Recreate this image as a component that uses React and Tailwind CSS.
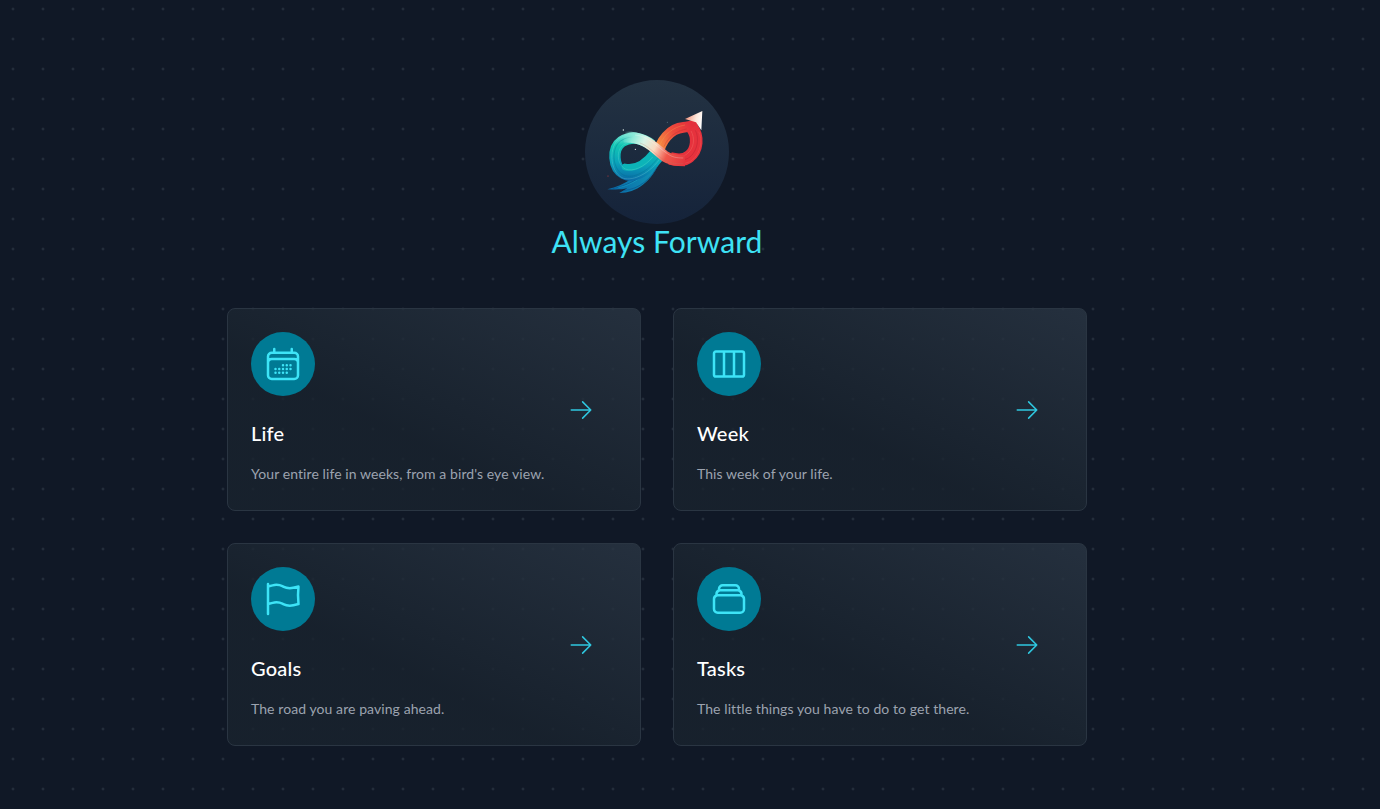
import React from "react";
import { HiOutlineCalendarDays, HiOutlineViewColumns, HiOutlineFlag, HiOutlineRectangleStack, HiOutlineArrowRight } from "react-icons/hi2";

function Logo() {
  return (
    <svg viewBox="-15 -45 432 432" className="w-36 h-36 block" fill="none">
      <defs>
        <linearGradient id="teal" gradientUnits="userSpaceOnUse" x1="120" y1="115" x2="110" y2="265">
          <stop offset="0" stopColor="#7fe6d6" />
          <stop offset="0.25" stopColor="#12c6b4" />
          <stop offset="0.6" stopColor="#0aa3ba" />
          <stop offset="1" stopColor="#0a62a4" />
        </linearGradient>
        <linearGradient id="cross" gradientUnits="userSpaceOnUse" x1="100" y1="120" x2="290" y2="215">
          <stop offset="0" stopColor="#7fe6d6" stopOpacity="0" />
          <stop offset="0.14" stopColor="#8fead9" />
          <stop offset="0.3" stopColor="#d8f3e6" />
          <stop offset="0.48" stopColor="#f9d9c0" />
          <stop offset="0.68" stopColor="#f0574a" />
          <stop offset="1" stopColor="#e3303c" />
        </linearGradient>
        <linearGradient id="red" gradientUnits="userSpaceOnUse" x1="205" y1="145" x2="305" y2="90">
          <stop offset="0" stopColor="#f68a42" />
          <stop offset="0.5" stopColor="#ee4a3c" />
          <stop offset="1" stopColor="#e3303c" />
        </linearGradient>
        <linearGradient id="tail" gradientUnits="userSpaceOnUse" x1="210" y1="190" x2="60" y2="285">
          <stop offset="0" stopColor="#129cb8" />
          <stop offset="1" stopColor="#0a6aa8" />
        </linearGradient>
        <linearGradient id="head" gradientUnits="userSpaceOnUse" x1="285" y1="72" x2="337" y2="85">
          <stop offset="0" stopColor="#f2907a" />
          <stop offset="0.6" stopColor="#fde8dc" />
          <stop offset="1" stopColor="#ffffff" />
        </linearGradient>
      </defs>
      {/* tail fan */}
      <path d="M175 200 C150 240 105 270 52 283 C80 284 95 284 112 280 C100 287 95 290 88 294 C135 295 185 265 214 190 Z" fill="url(#tail)" />
      <path d="M68 281 C115 272 165 245 192 205" stroke="#0a4f88" strokeWidth="2.4" opacity="0.7" />
      <path d="M100 287 C150 282 185 250 205 208" stroke="#0a4f88" strokeWidth="2.4" opacity="0.7" />
      <path d="M85 278 C125 270 165 245 185 210" stroke="#22c0d8" strokeWidth="2" opacity="0.5" />
      {/* left loop */}
      <path d="M205 185 C170 232 125 250 102 236 C68 218 66 160 95 140 C122 122 155 128 185 150" stroke="url(#teal)" strokeWidth="34" strokeLinecap="butt" />
      <path d="M190 172 C165 205 135 222 105 216" stroke="#0cb4b8" strokeWidth="20" strokeLinecap="round" />
      <path d="M188 186 C165 215 128 232 106 222 C80 208 78 165 100 150 C122 135 150 140 175 156" stroke="#7fe8da" strokeWidth="2.2" opacity="0.35" />
      <path d="M203 190 C168 236 124 252 100 240 C66 222 62 158 93 137 C122 118 158 126 186 146" stroke="#076f8c" strokeWidth="2.6" opacity="0.4" />
      <path d="M208 194 C172 242 122 260 96 248 C58 228 56 154 88 130 C120 110 162 118 192 140" stroke="#a6f2e6" strokeWidth="2.2" opacity="0.3" />
      {/* upper red sweep */}
      <path d="M205 178 C210 140 240 100 280 97 C295 96 308 92 322 88" stroke="url(#red)" strokeWidth="32" strokeLinecap="butt" />
      <path d="M210 150 C222 118 250 96 285 90" stroke="#f8a857" strokeWidth="2.2" opacity="0.45" />
      <path d="M222 155 C234 126 258 108 290 102" stroke="#a82130" strokeWidth="2.2" opacity="0.35" />
      {/* red loop rear */}
      <path d="M306 98 C326 125 322 165 298 184 C284 196 262 196 240 190" stroke="#e6323d" strokeWidth="38" strokeLinecap="butt" />
      <path d="M303 108 C316 130 312 160 292 176 C278 187 262 187 246 182" stroke="#f2706a" strokeWidth="2.2" opacity="0.55" />
      <path d="M316 106 C328 128 324 165 300 186 C284 198 262 198 240 191" stroke="#a81f30" strokeWidth="2.4" opacity="0.4" />
      <path d="M326 110 C338 134 334 172 306 196 C288 209 258 209 236 199" stroke="#f5605a" strokeWidth="2.2" opacity="0.5" />
      {/* crossing band */}
      <path d="M100 126 C165 122 195 162 225 184 C240 194 255 197 285 197" stroke="url(#cross)" strokeWidth="33" strokeLinecap="butt" />
      <path d="M135 120 C172 122 200 154 232 176 C246 186 258 189 280 189" stroke="#ffffff" strokeWidth="2.2" opacity="0.35" />
      <path d="M150 144 C174 152 192 174 220 194 C236 205 254 207 280 206" stroke="#b9786a" strokeWidth="2.2" opacity="0.35" />
      {/* arrow */}
      <path d="M285 72 L337 48 L334 106 L318 82 Z" fill="url(#head)" />
      {/* sparkles */}
      <circle cx="100" cy="105" r="2" fill="#e8f5f0" />
      <circle cx="136" cy="163" r="1.8" fill="#ffffff" />
      <circle cx="54" cy="243" r="1.8" fill="#c23c3c" />
      <circle cx="232" cy="82" r="1.5" fill="#5f7f88" />
    </svg>
  );
}

function Card({ Icon, title, desc }) {
  return (
    <div className="flex items-center justify-between h-[203px] rounded-lg border border-[#2a3542] bg-gradient-to-bl from-[#2a3644]/80 via-[#19232e]/80 via-60% to-[#19232e]/80 pl-[23px] pr-[46px]">
      <div className="self-start pt-[23px]">
        <div className="w-16 h-16 rounded-full bg-[#007a94] flex items-center justify-center">
          <Icon className="w-10 h-10 text-[#3de4f7]" style={{ strokeWidth: 1.5 }} />
        </div>
        <h2 className="mt-[23px] text-xl leading-7 font-medium text-white tracking-[0.2px]">{title}</h2>
        <p className="mt-[17px] text-sm leading-5 text-[#9ca3af] tracking-[0.08px]">{desc}</p>
      </div>
      <HiOutlineArrowRight className="w-[26px] h-[26px] text-[#2fc8e0]" style={{ strokeWidth: 1.4 }} />
    </div>
  );
}

export default function App() {
  return (
    <div className="min-h-[809px] bg-[#101826] bg-[radial-gradient(circle,#232d3a_1px,transparent_1.8px)] bg-[length:30px_30px] bg-[position:-2px_-6px] pt-20 pr-[66px] font-['Lato','Liberation_Sans',sans-serif]">
      <div className="w-[860px] mx-auto">
        <div className="flex flex-col items-center mb-12">
          <div className="w-36 h-36 rounded-full bg-gradient-to-b from-[#233242] to-[#15233a] overflow-hidden">
            <Logo />
          </div>
          <h1 className="text-3xl leading-[34px] mb-[2px] text-[#3ee2f5] tracking-[0.05px]">Always Forward</h1>
        </div>
        <div className="grid grid-cols-2 gap-8">
          <Card Icon={HiOutlineCalendarDays} title="Life" desc="Your entire life in weeks, from a bird's eye view." />
          <Card Icon={HiOutlineViewColumns} title="Week" desc="This week of your life." />
          <Card Icon={HiOutlineFlag} title="Goals" desc="The road you are paving ahead." />
          <Card Icon={HiOutlineRectangleStack} title="Tasks" desc="The little things you have to do to get there." />
        </div>
      </div>
    </div>
  );
}
